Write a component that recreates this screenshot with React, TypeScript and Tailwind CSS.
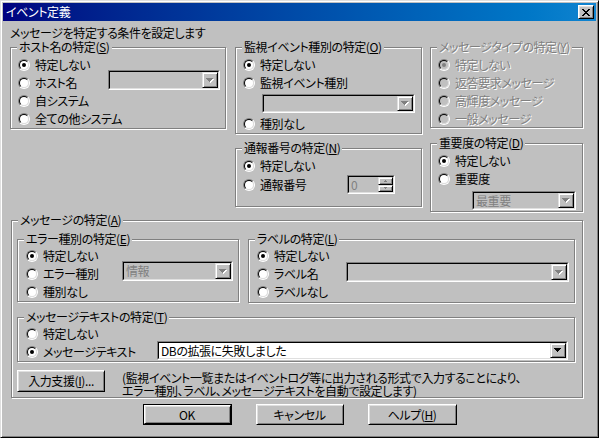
import type { ReactNode } from 'react';

const SUNKEN_OUT = 'border border-t-[#808080] border-l-[#808080] border-r-white border-b-white';
const SUNKEN_IN = 'border border-t-black border-l-black border-r-[#dfdfdf] border-b-[#dfdfdf]';
const RAISED =
  'border border-t-white border-l-white border-r-black border-b-black shadow-[inset_1px_1px_0_#dfdfdf,inset_-1px_-1px_0_#808080]';
const RAISED_SM =
  'border border-t-[#dfdfdf] border-l-[#dfdfdf] border-r-black border-b-black shadow-[inset_1px_1px_0_#fff,inset_-1px_-1px_0_#808080]';
const GRAY_TEXT = 'text-[#808080] [text-shadow:1px_1px_0_#fff]';

// pixel arrow: 7,5,3,1
const ARROW = 'M0 0h7v1h-1v1h-1v1h-1v1h-1v-1h-1v-1h-1v-1h-1z';

function Arrow({ disabled }: { disabled?: boolean }) {
  return (
    <svg width="8" height="5" viewBox="0 0 8 5" shapeRendering="crispEdges">
      {disabled && <path d={ARROW} transform="translate(1 1)" fill="#fff" />}
      <path d={ARROW} fill={disabled ? '#808080' : '#000'} />
    </svg>
  );
}

function CloseGlyph() {
  const rows = ['##....##', '.##..##.', '..####..', '...##...', '..####..', '.##..##.', '##....##'];
  return (
    <svg width="8" height="7" viewBox="0 0 8 7" shapeRendering="crispEdges">
      {rows.flatMap((r, y) =>
        r.split('').map((c, x) => (c === '#' ? <rect key={`${x}-${y}`} x={x} y={y} width="1" height="1" fill="#000" /> : null)),
      )}
    </svg>
  );
}

function Radio({
  label,
  checked,
  disabled,
  w = '',
}: {
  label: ReactNode;
  checked?: boolean;
  disabled?: boolean;
  w?: string;
}) {
  return (
    <div className={`flex h-[18px] shrink-0 items-center gap-[5px] ${w}`}>
      <span className={`grid h-[12px] w-[12px] shrink-0 place-items-center rounded-full ${SUNKEN_OUT}`}>
        <span
          className={`grid h-[10px] w-[10px] place-items-center rounded-full ${SUNKEN_IN} ${
            disabled ? 'bg-[#c0c0c0]' : 'bg-white'
          }`}
        >
          {checked && <span className={`h-[4px] w-[4px] rounded-full ${disabled ? 'bg-[#808080]' : 'bg-black'}`} />}
        </span>
      </span>
      <span className={`whitespace-nowrap ${disabled ? GRAY_TEXT : ''}`}>{label}</span>
    </div>
  );
}

function Group({
  label,
  className,
  disabled,
  children,
}: {
  label: ReactNode;
  className: string;
  disabled?: boolean;
  children?: ReactNode;
}) {
  return (
    <div
      className={`relative shrink-0 border border-[#808080] shadow-[inset_1px_1px_0_#fff,1px_1px_0_#fff] ${className}`}
    >
      <span
        className={`absolute -top-[7px] left-[6px] whitespace-nowrap bg-[#c0c0c0] px-[2px] leading-[12px] ${
          disabled ? GRAY_TEXT : ''
        }`}
      >
        {label}
      </span>
      {children}
    </div>
  );
}

function Combo({ className, value, enabled }: { className: string; value?: string; enabled?: boolean }) {
  return (
    <div className={`flex shrink-0 ${SUNKEN_OUT} ${className}`}>
      <div className={`flex flex-1 ${SUNKEN_IN} ${enabled ? 'bg-white' : 'bg-[#c0c0c0]'}`}>
        <span className={`flex flex-1 items-center pl-[2px] whitespace-nowrap ${enabled ? '' : 'text-[#808080]'}`}>
          {value}
        </span>
        <span className={`grid w-[16px] place-items-center bg-[#c0c0c0] ${RAISED_SM}`}>
          <Arrow disabled={!enabled} />
        </span>
      </div>
    </div>
  );
}

function SpinHalf({ up }: { up?: boolean }) {
  return (
    <span className={`grid flex-1 place-items-center bg-[#c0c0c0] ${RAISED_SM}`}>
      <svg width="3" height="2" viewBox="0 0 3 2" shapeRendering="crispEdges">
        <path d={up ? 'M1 0h1v1h1v1h-3v-1h1z' : 'M0 0h3v1h-1v1h-1v-1h-1z'} fill="#808080" />
      </svg>
    </span>
  );
}

function Spin() {
  return (
    <div className={`flex h-[19px] w-[48px] shrink-0 ${SUNKEN_OUT}`}>
      <div className={`flex flex-1 ${SUNKEN_IN} bg-[#c0c0c0]`}>
        <span className="flex flex-1 items-center pl-[2px] text-[#808080]">0</span>
        <span className="flex w-[15px] flex-col">
          <SpinHalf up />
          <SpinHalf />
        </span>
      </div>
    </div>
  );
}

function Btn({ children, className, def }: { children: ReactNode; className: string; def?: boolean }) {
  const inner = <div className={`grid h-full w-full place-items-center bg-[#c0c0c0] ${RAISED}`}>{children}</div>;
  return def ? (
    <div className={`shrink-0 border border-black ${className}`}>{inner}</div>
  ) : (
    <div className={`shrink-0 ${className}`}>{inner}</div>
  );
}

export default function App() {
  return (
    <div className="font-['Noto_Sans_CJK_JP','Noto_Sans',sans-serif] text-[12px] leading-[14px] tracking-[-0.4px] text-black [font-feature-settings:'palt']">
      <div className="flex h-[438px] w-[599px] flex-col border border-t-[#dfdfdf] border-l-[#dfdfdf] border-r-black border-b-black bg-[#c0c0c0] p-[2px] shadow-[inset_1px_1px_0_#fff,inset_-1px_-1px_0_#808080]">
        {/* title bar */}
        <div className="flex h-[18px] shrink-0 items-center bg-linear-to-r from-[#000080] to-[#1084d0] px-[2px]">
          <span className="flex-1 pl-[1px] text-white">イベント定義</span>
          <span className={`grid h-[14px] w-[16px] place-items-center bg-[#c0c0c0] ${RAISED}`}>
            <CloseGlyph />
          </span>
        </div>

        <div className="ml-[7px] mt-[6px] leading-[12px]">メッセージを特定する条件を設定します</div>

        {/* upper groups */}
        <div className="mt-[8px] flex items-start">
          <Group label={<>ホスト名の特定(<u>S</u>)</>} className="ml-[7px] h-[82px] w-[216px]">
            <div className="flex flex-col pl-[7px] pt-[8px]">
              <Radio label="特定しない" checked />
              <div className="flex">
                <Radio label="ホスト名" w="w-[90px]" />
                <Combo className="-mt-[4px] h-[20px] w-[112px] self-start" />
              </div>
              <Radio label="自システム" />
              <Radio label="全ての他システム" />
            </div>
          </Group>

          <div className="ml-[9px] flex flex-col">
            <Group label={<>監視イベント種別の特定(<u>O</u>)</>} className="h-[87px] w-[187px]">
              <div className="flex flex-col pl-[7px] pt-[8px]">
                <Radio label="特定しない" checked />
                <Radio label="監視イベント種別" />
                <Combo className="ml-[19px] mt-[2px] h-[19px] w-[153px]" />
                <Radio label="種別なし" w="mt-[2px]" />
              </div>
            </Group>
            <Group label={<>通報番号の特定(<u>N</u>)</>} className="mt-[14px] h-[59px] w-[187px]">
              <div className="flex flex-col pl-[7px] pt-[8px]">
                <Radio label="特定しない" checked />
                <div className="flex items-center">
                  <Radio label="通報番号" w="w-[104px]" />
                  <Spin />
                </div>
              </div>
            </Group>
          </div>

          <div className="ml-[8px] flex flex-col">
            <Group label={<>メッセージタイプの特定(<u>Y</u>)</>} className="h-[81px] w-[153px]" disabled>
              <div className="flex flex-col pl-[7px] pt-[8px]">
                <Radio label="特定しない" checked disabled />
                <Radio label="返答要求メッセージ" disabled />
                <Radio label="高輝度メッセージ" disabled />
                <Radio label="一般メッセージ" disabled />
              </div>
            </Group>
            <Group label={<>重要度の特定(<u>D</u>)</>} className="mt-[15px] h-[69px] w-[153px]">
              <div className="flex flex-col pl-[7px] pt-[8px]">
                <Radio label="特定しない" checked />
                <Radio label="重要度" />
                <Combo className="ml-[34px] mt-[3px] h-[19px] w-[104px]" value="最重要" />
              </div>
            </Group>
          </div>
        </div>

        {/* message group */}
        <Group label={<>メッセージの特定(<u>A</u>)</>} className="ml-[8px] mt-[8px] h-[178px] w-[572px]">
          <div className="flex flex-col pl-[5px] pt-[18px]">
            <div className="flex items-start">
              <Group label={<>エラー種別の特定(<u>E</u>)</>} className="h-[63px] w-[222px]">
                <div className="flex flex-col pl-[8px] pt-[7px]">
                  <Radio label="特定しない" checked />
                  <div className="flex">
                    <Radio label="エラー種別" w="w-[96px]" />
                    <Combo className="-mt-[4px] h-[20px] w-[111px] self-start" value="情報" />
                  </div>
                  <Radio label="種別なし" />
                </div>
              </Group>
              <Group label={<>ラベルの特定(<u>L</u>)</>} className="ml-[9px] h-[64px] w-[327px]">
                <div className="flex flex-col pl-[8px] pt-[7px]">
                  <Radio label="特定しない" checked />
                  <div className="flex">
                    <Radio label="ラベル名" w="w-[89px]" />
                    <Combo className="-mt-[3px] h-[20px] w-[223px] self-start" />
                  </div>
                  <Radio label="ラベルなし" />
                </div>
              </Group>
            </div>

            <Group label={<>メッセージテキストの特定(<u>T</u>)</>} className="mt-[14px] h-[45px] w-[558px]">
              <div className="flex flex-col pl-[8px] pt-[7px]">
                <Radio label="特定しない" />
                <div className="flex">
                  <Radio label="メッセージテキスト" checked w="w-[131px]" />
                  <Combo
                    className="-mt-[2px] h-[19px] w-[411px] self-start"
                    value="DBの拡張に失敗しました"
                    enabled
                  />
                </div>
              </div>
            </Group>

            <div className="mt-[8px] flex items-start">
              <Btn className="h-[22px] w-[88px]">
                <span>
                  入力支援(<u>I</u>)...
                </span>
              </Btn>
              <p className="ml-[17px] mt-[1px] leading-[13px]">
                (監視イベント一覧またはイベントログ等に出力される形式で入力することにより、
                <br />
                エラー種別、ラベル、メッセージテキストを自動で設定します)
              </p>
            </div>
          </div>
        </Group>

        {/* dialog buttons */}
        <div className="mt-[6px] flex justify-center gap-[24px]">
          <Btn className="h-[21px] w-[89px]" def>
            OK
          </Btn>
          <Btn className="h-[21px] w-[88px]">キャンセル</Btn>
          <Btn className="h-[21px] w-[89px]">
            <span>
              ヘルプ(<u>H</u>)
            </span>
          </Btn>
        </div>
      </div>
    </div>
  );
}
